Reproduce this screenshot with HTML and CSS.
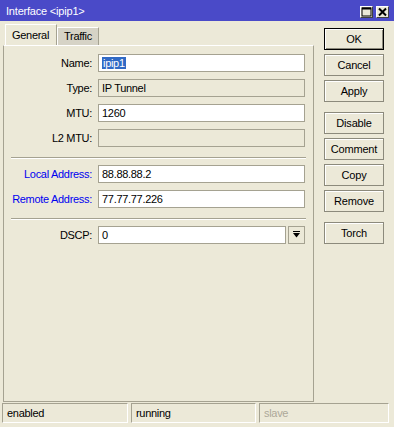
FILE: index.html
```html
<!DOCTYPE html>
<html lang="en">
<head>
    <meta charset="UTF-8">
    <title>Interface &lt;ipip1&gt;</title>
    <link rel="stylesheet" href="styles.css">
</head>
<body>
    <div class="window">
        <div class="titlebar">
            <span class="title">Interface &lt;ipip1&gt;</span>
            <div class="title-buttons">
                <span class="tbtn">
                    <svg width="11" height="10" viewBox="0 0 11 10"><rect x="1" y="1" width="9" height="8" fill="none" stroke="#000" stroke-width="1"/><rect x="1" y="0.5" width="9" height="2" fill="#000"/></svg>
                </span>
                <span class="tbtn">
                    <svg width="11" height="10" viewBox="0 0 11 10"><path d="M2 1.5 L9 8.5 M9 1.5 L2 8.5" stroke="#000" stroke-width="2"/></svg>
                </span>
            </div>
        </div>
        <div class="main">
            <div class="left">
                <div class="tabs">
                    <div class="tab active">General</div>
                    <div class="tab">Traffic</div>
                </div>
                <div class="panel">
                    <div class="form">
                        <label>Name:</label>
                        <div class="field"><span class="selected">ipip1</span></div>
                        <label>Type:</label>
                        <div class="field disabled">IP Tunnel</div>
                        <label>MTU:</label>
                        <div class="field">1260</div>
                        <label>L2 MTU:</label>
                        <div class="field disabled"></div>
                    </div>
                    <div class="separator"></div>
                    <div class="form">
                        <label class="blue">Local Address:</label>
                        <div class="field">88.88.88.2</div>
                        <label class="blue">Remote Address:</label>
                        <div class="field">77.77.77.226</div>
                    </div>
                    <div class="separator"></div>
                    <div class="form">
                        <label>DSCP:</label>
                        <div class="combo">
                            <div class="field">0</div>
                            <span class="drop">
                                <svg width="9" height="8" viewBox="0 0 9 8"><rect x="1" y="0" width="7" height="1" fill="#000"/><path d="M1 2 L8 2 L4.5 6.5 Z" fill="#000"/></svg>
                            </span>
                        </div>
                    </div>
                </div>
            </div>
            <div class="buttons">
                <button class="default">OK</button>
                <button>Cancel</button>
                <button>Apply</button>
                <button class="group">Disable</button>
                <button>Comment</button>
                <button>Copy</button>
                <button>Remove</button>
                <button class="group">Torch</button>
            </div>
        </div>
        <div class="statusbar">
            <div class="cell">enabled</div>
            <div class="cell">running</div>
            <div class="cell dim">slave</div>
        </div>
    </div>
</body>
</html>
```

FILE: styles.css
```css
body {
    margin: 0;
    padding: 0;
    font-family: "Liberation Sans", Arial, sans-serif;
    font-size: 11px;
    letter-spacing: -0.3px;
    color: #000;
    background-color: #ece9d8;
}
.window {
    width: 394px;
    height: 427px;
    display: flex;
    flex-direction: column;
    background-color: #ece9d8;
}
.titlebar {
    height: 21px;
    background-color: #4a4ac8;
    display: flex;
    align-items: center;
    justify-content: space-between;
    padding: 0 5px 0 6px;
}
.title {
    color: #fff;
    font-size: 11px;
    letter-spacing: -0.2px;
}
.title-buttons {
    display: flex;
    gap: 3px;
    margin-top: 3px;
}
.tbtn {
    width: 13px;
    height: 12px;
    background-color: #ece9d8;
    border: 1px solid #fff;
    border-right-color: #404040;
    border-bottom-color: #404040;
    box-sizing: border-box;
    display: flex;
    align-items: center;
    justify-content: center;
}
.main {
    display: flex;
    gap: 10px;
    flex: 1;
}
.left {
    margin-left: 3px;
    width: 311px;
    display: flex;
    flex-direction: column;
}
.tabs {
    display: flex;
    align-items: flex-end;
    height: 24px;
    padding-left: 2px;
}
.tab {
    height: 18px;
    line-height: 17px;
    padding: 0 6px;
    background-color: #d6d3c6;
    border: 1px solid #fff;
    border-bottom: none;
    border-right-color: #a5a291;
    box-sizing: border-box;
    white-space: nowrap;
}
.tab.active {
    height: 21px;
    line-height: 21px;
    background-color: #ece9d8;
    border-right: 1px solid #a5a291;
    padding: 0 7px 0 6px;
}
.panel {
    flex: 1;
    border: 1px solid #a5a291;
    border-top-color: #fff;
    margin-bottom: 1px;
    padding-top: 8px;
}
.form {
    display: grid;
    grid-template-columns: 88px 207px;
    column-gap: 6px;
    row-gap: 7px;
}
label {
    text-align: right;
    line-height: 18px;
    white-space: nowrap;
}
label.blue {
    color: #0000f0;
}
.field {
    height: 18px;
    line-height: 16px;
    box-sizing: border-box;
    border: 1px solid #a5a291;
    background-color: #fff;
    padding-left: 3px;
}
.field.disabled {
    background-color: #ece9d8;
}
.selected {
    background-color: #316ac5;
    color: #fff;
    padding: 0 1px;
}
.separator {
    margin: 10px 7px 6px 7px;
    width: 295px;
    border-top: 1px solid #a5a291;
    border-bottom: 1px solid #fff;
}
.combo {
    display: flex;
    gap: 2px;
}
.combo .field {
    flex: 1;
}
.drop {
    width: 17px;
    height: 18px;
    box-sizing: border-box;
    border: 1px solid #a5a291;
    display: flex;
    align-items: center;
    justify-content: center;
}
.buttons {
    display: flex;
    flex-direction: column;
    gap: 4px;
    padding-top: 7px;
}
button {
    width: 60px;
    height: 22px;
    padding: 0;
    font-family: inherit;
    font-size: 11px;
    letter-spacing: -0.2px;
    background-color: #ece9d8;
    border: 1px solid #8c8a7c;
    box-shadow: inset 1px 1px 0 #fff;
    color: #000;
}
button.default {
    border: 1px solid #000;
    box-shadow: inset 1px 1px 0 #fff, inset -1px -1px 0 #8c8a7c;
}
button.group {
    margin-top: 6px;
}
.statusbar {
    display: grid;
    grid-template-columns: 126px 125px 130px;
    column-gap: 3px;
    padding: 0 0 4px 2px;
}
.cell {
    height: 20px;
    line-height: 19px;
    box-sizing: border-box;
    border: 1px solid #a5a291;
    border-right-color: #fff;
    border-bottom-color: #fff;
    padding-left: 4px;
}
.cell.dim {
    color: #aca899;
}
```
